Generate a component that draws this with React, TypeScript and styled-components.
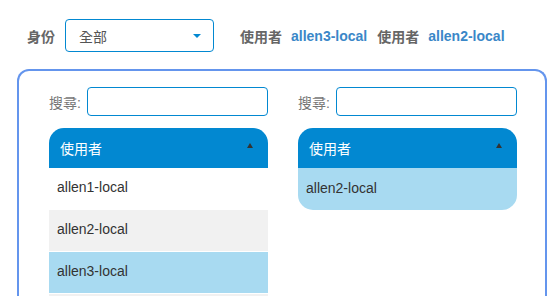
import React from 'react';
import styled, { createGlobalStyle } from 'styled-components';

const GlobalStyle = createGlobalStyle`
  body {
    margin: 0;
    background: #fff;
    font-family: "Liberation Sans", Arial, "Noto Sans CJK TC", sans-serif;
    font-size: 14px;
    color: #333;
  }
`;

const TopBar = styled.div`
  display: flex;
  align-items: center;
  padding: 19px 0 0 27px;
  height: 33px;
`;

const FilterLabel = styled.span`
  font-weight: bold;
  color: #666;
  margin-right: 10px;
`;

const Select = styled.div`
  box-sizing: border-box;
  width: 149px;
  height: 33px;
  border: 1px solid #0288d1;
  border-radius: 4px;
  display: flex;
  align-items: center;
  justify-content: space-between;
  padding: 0 12px 0 13px;
  color: #555;
  margin-right: 26px;
`;

const Caret = styled.span`
  width: 0;
  height: 0;
  border-left: 4px solid transparent;
  border-right: 4px solid transparent;
  border-top: 4px solid #0288d1;
`;

const Tag = styled.span`
  font-weight: bold;
  color: #666;
  margin-right: 9px;
`;

const TagValue = styled.span`
  font-weight: bold;
  color: #3a87c8;
  margin-right: 10px;
`;

const Panel = styled.div`
  box-sizing: border-box;
  margin: 17px 0 0 17px;
  width: 530px;
  height: 227px;
  overflow: hidden;
  border: 2px solid #6495ed;
  border-bottom: none;
  border-radius: 12px 12px 0 0;
  padding: 16px 28px 0 30px;
  display: flex;
  gap: 30px;
  align-items: flex-start;
`;

const Column = styled.div`
  width: 219px;
  display: flex;
  flex-direction: column;
`;

const SearchRow = styled.div`
  display: flex;
  align-items: center;
  margin-bottom: 12px;
`;

const SearchLabel = styled.span`
  color: #777;
  margin-right: 6px;
  white-space: nowrap;
`;

const SearchInput = styled.input`
  flex: 1;
  min-width: 0;
  box-sizing: border-box;
  height: 29px;
  border: 1px solid #0288d1;
  border-radius: 4px;
  outline: none;
`;

const Table = styled.div<{ $rounded?: boolean }>`
  border-radius: ${p => (p.$rounded ? '15px' : '15px 15px 0 0')};
  overflow: hidden;
`;

const Header = styled.div`
  height: 40px;
  background: #0288d1;
  color: #fff;
  display: flex;
  align-items: center;
  justify-content: space-between;
  padding: 0 15px 0 11px;
`;

const SortArrow = styled.span`
  width: 0;
  height: 0;
  border-left: 3px solid transparent;
  border-right: 3px solid transparent;
  border-bottom: 5px solid #333;
  margin-top: -6px;
`;

type Tone = 'plain' | 'alt' | 'selected';

const Row = styled.div<{ $tone: Tone }>`
  box-sizing: border-box;
  height: 42px;
  border-bottom: 1px solid #fff;
  display: flex;
  align-items: center;
  padding: 0 0 3px 8px;
  color: #333;
  background: ${p =>
    p.$tone === 'selected' ? '#a8daf1' : p.$tone === 'alt' ? '#f1f1f1' : '#fff'};
  &:last-child {
    border-bottom: none;
  }
`;

const leftRows: { name: string; tone: Tone }[] = [
  { name: 'allen1-local', tone: 'plain' },
  { name: 'allen2-local', tone: 'alt' },
  { name: 'allen3-local', tone: 'selected' },
  { name: 'allen4-local', tone: 'alt' },
];

const rightRows: { name: string; tone: Tone }[] = [{ name: 'allen2-local', tone: 'selected' }];

function UserList({ rows, rounded }: { rows: { name: string; tone: Tone }[]; rounded?: boolean }) {
  return (
    <Column>
      <SearchRow>
        <SearchLabel>搜尋:</SearchLabel>
        <SearchInput />
      </SearchRow>
      <Table $rounded={rounded}>
        <Header>
          使用者
          <SortArrow />
        </Header>
        {rows.map(r => (
          <Row key={r.name} $tone={r.tone}>{r.name}</Row>
        ))}
      </Table>
    </Column>
  );
}

export default function App() {
  return (
    <>
      <GlobalStyle />
      <TopBar>
        <FilterLabel>身份</FilterLabel>
        <Select>
          全部
          <Caret />
        </Select>
        <Tag>使用者</Tag>
        <TagValue>allen3-local</TagValue>
        <Tag>使用者</Tag>
        <TagValue>allen2-local</TagValue>
      </TopBar>
      <Panel>
        <UserList rows={leftRows} />
        <UserList rows={rightRows} rounded />
      </Panel>
    </>
  );
}
